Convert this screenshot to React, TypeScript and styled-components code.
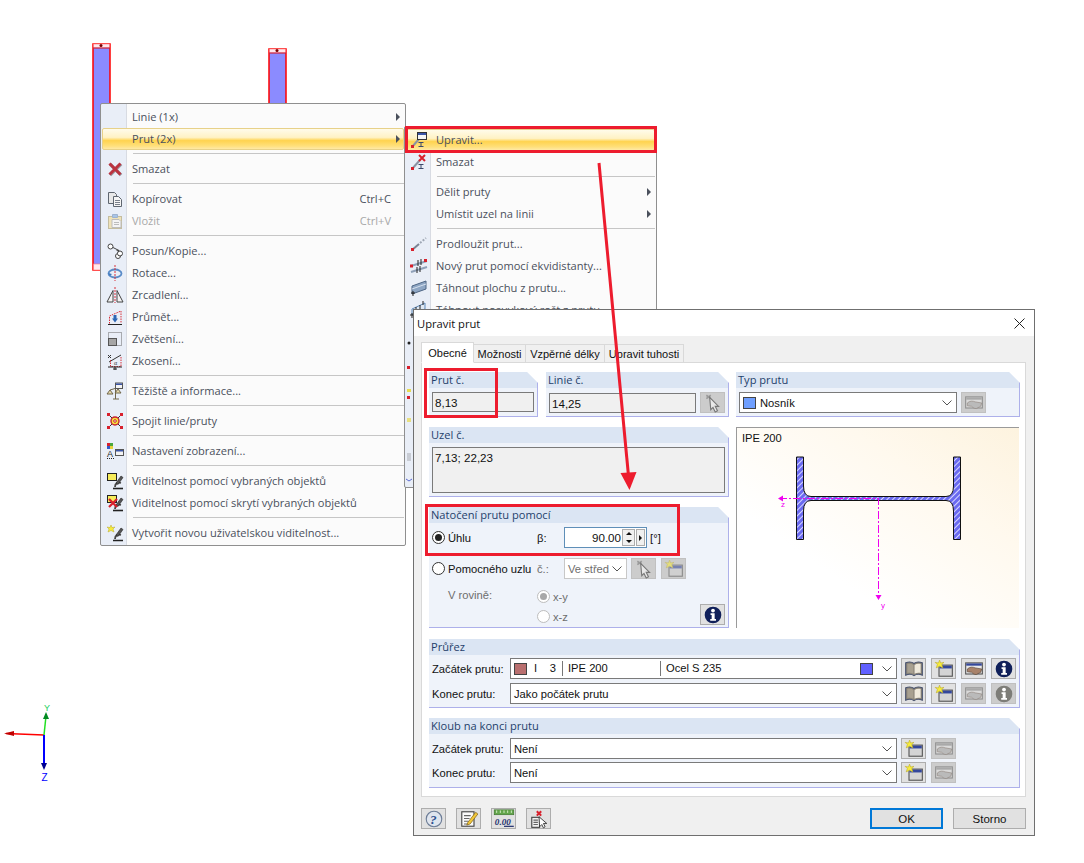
import React from 'react';
import styled, { createGlobalStyle } from 'styled-components';

const GlobalStyle = createGlobalStyle`
  html, body { margin: 0; padding: 0; background: #fff; }
  body { font-family: 'Open Sans', 'Liberation Sans', sans-serif; }
  * { box-sizing: border-box; }
`;

const Canvas = styled.div`
  position: relative;
  width: 1084px;
  height: 863px;
  background: #fff;
  overflow: hidden;
`;

/* ---------- model behind the windows ---------- */

const Drawing = styled.svg`
  position: absolute;
  left: 0;
  top: 0;
`;

/* ---------- context menus ---------- */

const MenuBox = styled.div<{ $left: number; $top: number; $width: number; $height: number }>`
  position: absolute;
  left: ${({ $left }) => $left}px;
  top: ${({ $top }) => $top}px;
  width: ${({ $width }) => $width}px;
  height: ${({ $height }) => $height}px;
  padding: 2px 1px;
  border: 1px solid #8f8f8f;
  border-radius: 2px;
  overflow: hidden;
  background: linear-gradient(90deg, #e9eef7 25px, #d8dbe2 25px, #d8dbe2 26px, #fbfbfb 26px);
  font-family: 'Open Sans', 'Noto Sans', sans-serif;
  font-size: 11.1px;
  color: #4a505c;
`;

const MenuRow = styled.div<{ $active?: boolean; $disabled?: boolean }>`
  display: flex;
  align-items: center;
  height: 22px;
  padding-right: 3px;
  border: 1px solid transparent;
  border-radius: 2px;
  white-space: nowrap;
  color: ${({ $disabled }) => ($disabled ? '#a8a8a8' : 'inherit')};
  ${({ $active }) =>
    $active &&
    `
    border-color: #e7d189;
    background: linear-gradient(#fffbea 0%, #fff2c4 42%, #ffd34f 58%, #ffe07c 85%, #ffe9a6 100%);
  `}
`;

const MenuIcon = styled.span`
  display: flex;
  align-items: center;
  justify-content: center;
  flex: none;
  width: 23px;
  margin-right: 6px;
`;

const MenuLabel = styled.span`
  flex: 1;
  padding-bottom: 2px;
`;

const Shortcut = styled.span`
  margin-right: 9px;
  padding-bottom: 2px;
`;

const SubArrow = styled.span`
  width: 0;
  height: 0;
  margin-left: auto;
  border-left: 4px solid #4a505c;
  border-top: 4px solid transparent;
  border-bottom: 4px solid transparent;
`;

const MenuSeparator = styled.div`
  height: 8px;
  margin-left: 31px;
  padding-top: 3px;
  &::after {
    content: '';
    display: block;
    height: 1px;
    background: #c6c6c6;
  }
`;

const PeekIcons = styled.svg`
  position: absolute;
  left: 1px;
  top: 200px;
`;

/* ---------- dialog ---------- */

const Dialog = styled.div`
  position: absolute;
  left: 413px;
  top: 309px;
  width: 622px;
  height: 527px;
  display: flex;
  flex-direction: column;
  border: 1px solid #6f6f6f;
  background: #f0f0f0;
  font-family: 'Liberation Sans', Arial, sans-serif;
  font-size: 11.2px;
  color: #111;
`;

const TitleBar = styled.div`
  display: flex;
  align-items: center;
  justify-content: space-between;
  height: 26px;
  padding: 0 9px 0 3px;
  background: #fff;
  font-family: 'Open Sans', sans-serif;
  font-size: 11.2px;
  color: #111;
`;

const DialogBody = styled.div`
  display: flex;
  flex-direction: column;
  flex: 1;
  padding: 6px 8px 6px 7px;
`;

const TabStrip = styled.div`
  display: flex;
  align-items: flex-end;
  height: 21px;
  margin-bottom: -1px;
`;

const Tab = styled.div<{ $active?: boolean; $width: number }>`
  position: relative;
  z-index: ${({ $active }) => ($active ? 1 : 0)};
  display: flex;
  align-items: center;
  justify-content: center;
  width: ${({ $width }) => $width}px;
  height: ${({ $active }) => ($active ? 21 : 19)}px;
  border: 1px solid #d9d9d9;
  border-left-width: ${({ $active }) => ($active ? 1 : 0)}px;
  border-bottom-color: ${({ $active }) => ($active ? '#fff' : '#d9d9d9')};
  background: ${({ $active }) => ($active ? '#fff' : '#f0f0f0')};
  font-size: 11px;
`;

const TabPage = styled.div`
  height: 435px;
  padding: 9px 5px 0 7px;
  border: 1px solid #d9d9d9;
  background: #fff;
`;

const UpperGrid = styled.div`
  display: grid;
  grid-template-columns: 300px 284px;
  column-gap: 7px;
  height: 256px;
`;

const Column = styled.div`
  display: flex;
  flex-direction: column;
  gap: 10px;
`;

const SectionRow = styled.div`
  display: grid;
  grid-template-columns: 109px 183px;
  column-gap: 8px;
`;

const Section = styled.section<{ $height: number; $gapTop?: number }>`
  height: ${({ $height }) => $height}px;
  margin-top: ${({ $gapTop }) => $gapTop || 0}px;
  border-right: 1px solid #adb0ea;
  border-bottom: 1px solid #adb0ea;
  background: #eff3fa;
  clip-path: polygon(0 0, calc(100% - 11px) 0, 100% 11px, 100% 100%, 0 100%);
`;

const SectionTitle = styled.div`
  height: 16px;
  padding-left: 2px;
  background: #dbe5f3;
  font-family: 'Open Sans', sans-serif;
  font-size: 11.1px;
  line-height: 15px;
  color: #1f3f6b;
`;

const SectionBody = styled.div<{ $top?: number; $gap?: number }>`
  display: flex;
  flex-direction: column;
  gap: ${({ $gap }) => $gap || 0}px;
  padding: ${({ $top }) => $top ?? 4}px 3px 0;
`;

const FieldRow = styled.div<{ $gap?: number; $top?: number; $left?: number }>`
  display: flex;
  align-items: center;
  gap: ${({ $gap }) => $gap ?? 4}px;
  margin-top: ${({ $top }) => $top || 0}px;
  margin-left: ${({ $left }) => $left || 0}px;
`;

const ReadOnlyField = styled.div<{ $width?: number; $height?: number }>`
  flex: none;
  width: ${({ $width }) => ($width ? `${$width}px` : '100%')};
  height: ${({ $height }) => $height || 20}px;
  padding: 2px 2px;
  border: 1px solid #7a7a7a;
  background: #f0f0f0;
  font-size: 11.6px;
  line-height: 15px;
`;

const Select = styled.div<{ $width: number; $disabled?: boolean }>`
  position: relative;
  display: flex;
  align-items: center;
  flex: none;
  width: ${({ $width }) => $width}px;
  height: 21px;
  padding-left: 3px;
  border: 1px solid ${({ $disabled }) => ($disabled ? '#c8c8c8' : '#7a7a7a')};
  background: #fff;
  color: ${({ $disabled }) => ($disabled ? '#6d6d6d' : '#111')};
`;

const Chevron = styled.svg`
  position: absolute;
  right: 3px;
  top: 6px;
`;

const Swatch = styled.span<{ $color: string }>`
  flex: none;
  width: 13px;
  height: 12px;
  margin-right: 4px;
  border: 1px solid #444;
  background: ${({ $color }) => $color};
`;

const Cell = styled.span<{ $width: number; $divider?: boolean }>`
  flex: none;
  width: ${({ $width }) => $width}px;
  height: 15px;
  line-height: 15px;
  padding-left: ${({ $divider }) => ($divider ? 5 : 0)}px;
  border-left: ${({ $divider }) => ($divider ? '1px solid #777' : '0')};
`;

const IconButton = styled.button<{ $disabled?: boolean }>`
  display: flex;
  align-items: center;
  justify-content: center;
  flex: none;
  width: 25px;
  height: 21px;
  padding: 0;
  border: 1px solid ${({ $disabled }) => ($disabled ? '#c0c0c0' : '#adadad')};
  background: ${({ $disabled }) => ($disabled ? '#cccccc' : '#e1e1e1')};
`;

const Preview = styled.div`
  height: 201px;
  margin-right: 1px;
  padding: 3px 0 0 0;
  border-top: 1px solid #9a9a9a;
  border-left: 1px solid #9a9a9a;
  background: linear-gradient(35deg, #ffffff 30%, #fff9ee 70%, #fdf3df 100%);
`;

const PreviewLabel = styled.div`
  height: 14px;
  padding-left: 5px;
  line-height: 14px;
`;

const PreviewDrawing = styled.svg`
  display: block;
`;

const RadioLabel = styled.label<{ $width: number; $disabled?: boolean }>`
  display: flex;
  align-items: center;
  flex: none;
  gap: 3px;
  width: ${({ $width }) => $width}px;
  white-space: nowrap;
  color: ${({ $disabled }) => ($disabled ? '#6d6d6d' : '#111')};
`;

const Radio = styled.span<{ $checked?: boolean; $disabled?: boolean }>`
  position: relative;
  flex: none;
  width: 13px;
  height: 13px;
  border: 1px solid ${({ $disabled }) => ($disabled ? '#bdbdbd' : '#333')};
  border-radius: 50%;
  background: #fff;
  &::after {
    content: '';
    display: ${({ $checked }) => ($checked ? 'block' : 'none')};
    position: absolute;
    left: 2px;
    top: 2px;
    width: 7px;
    height: 7px;
    border-radius: 50%;
    background: ${({ $disabled }) => ($disabled ? '#a8a8a8' : '#222')};
  }
`;

const SmallLabel = styled.span<{ $width: number; $disabled?: boolean }>`
  flex: none;
  width: ${({ $width }) => $width}px;
  white-space: nowrap;
  color: ${({ $disabled }) => ($disabled ? '#6d6d6d' : '#111')};
`;

const SpinField = styled.div`
  display: flex;
  align-items: center;
  flex: none;
  width: 83px;
  height: 21px;
  padding-right: 1px;
  border: 1px solid #5f8fb8;
  background: #fff;
  font-size: 11.6px;
`;

const SpinValue = styled.span`
  flex: 1;
  text-align: right;
  padding-right: 1px;
`;

const SpinButtons = styled.span`
  display: flex;
  flex-direction: column;
  flex: none;
  width: 13px;
  height: 17px;
  border: 1px solid #adadad;
  background: #f0f0f0;
  font-size: 0;
`;

const SpinPart = styled.span<{ $down?: boolean }>`
  flex: 1;
  display: flex;
  align-items: center;
  justify-content: center;
  &::after {
    content: '';
    border-left: 3px solid transparent;
    border-right: 3px solid transparent;
    ${({ $down }) => ($down ? 'border-top: 3px solid #111;' : 'border-bottom: 3px solid #111;')}
  }
`;

const SpinNext = styled.span`
  display: flex;
  align-items: center;
  justify-content: center;
  flex: none;
  width: 9px;
  height: 17px;
  margin-left: 1px;
  border: 1px solid #adadad;
  background: #f0f0f0;
  &::after {
    content: '';
    border-top: 3px solid transparent;
    border-bottom: 3px solid transparent;
    border-left: 3px solid #111;
  }
`;

const PlaneBlock = styled.div`
  display: flex;
  margin-top: 10px;
  padding-left: 16px;
`;

const PlaneOptions = styled.div`
  display: flex;
  flex-direction: column;
  gap: 7px;
  margin-top: 1px;
`;

const InfoSlot = styled.div`
  margin-left: auto;
  margin-top: 15px;
`;

const Footer = styled.div`
  display: flex;
  align-items: center;
  gap: 10px;
  margin-top: 11px;
`;

const FooterSpacer = styled.div`
  flex: 1;
`;

const DialogButton = styled.button<{ $primary?: boolean }>`
  width: 73px;
  height: 21px;
  padding: 0;
  border: ${({ $primary }) => ($primary ? '2px solid #0078d7' : '1px solid #adadad')};
  background: #e1e1e1;
  font-family: 'Liberation Sans', Arial, sans-serif;
  font-size: 11.5px;
  color: #111;
`;

/* ---------- annotations ---------- */

const RedBox = styled.div<{ $left: number; $top: number; $width: number; $height: number }>`
  position: absolute;
  left: ${({ $left }) => $left}px;
  top: ${({ $top }) => $top}px;
  width: ${({ $width }) => $width}px;
  height: ${({ $height }) => $height}px;
  border: 3px solid #ed1c2e;
  pointer-events: none;
`;

const ArrowOverlay = styled.svg`
  position: absolute;
  left: 0;
  top: 0;
  pointer-events: none;
`;

/* ---------- icons ---------- */

const Ico: React.FC<{ size?: number; children: React.ReactNode }> = ({ size = 18, children }) => (
  <svg width={size} height={size} viewBox="0 0 18 18" fill="none">
    {children}
  </svg>
);

const Beam = () => (
  <g stroke="#3d4a6b" strokeWidth="1">
    <path d="M8.5 15.5h5M8.5 11.5h5M11 11.5v4" />
  </g>
);

const IconDelete = () => (
  <Ico>
    <path d="M3.5 3.5l11 11M14.5 3.5l-11 11" stroke="#9aa0a8" strokeWidth="3.4" transform="translate(.6 .6)" />
    <path d="M3.5 3.5l11 11M14.5 3.5l-11 11" stroke="#bb3340" strokeWidth="3" />
  </Ico>
);
const IconCopy = () => (
  <Ico>
    <path d="M2.5 2.5h6l2 2v9h-8z" fill="#e8e8e8" stroke="#5f6670" />
    <path d="M7.5 6.5h5l3 3v7h-8z" fill="#f5f5f5" stroke="#5f6670" />
    <path d="M9 10.5h5M9 12.5h5M9 14.5h5" stroke="#7a808a" />
  </Ico>
);
const IconPaste = () => (
  <Ico>
    <rect x="2.5" y="4.5" width="13" height="12" fill="#efe2b8" stroke="#c4bd9f" />
    <path d="M6.5 2.5h5v3h-5z" fill="#a8c4e6" stroke="#9eb2cf" />
    <path d="M6 7.5h7l2 2v6h-9z" fill="#f4f4f4" stroke="#bdbdbd" />
    <path d="M8 10.5h5M8 12.5h5" stroke="#bcbcbc" />
  </Ico>
);
const IconMove = () => (
  <Ico>
    <circle cx="4.5" cy="4.5" r="2.5" stroke="#444" fill="#fff" />
    <circle cx="12" cy="14" r="2.5" stroke="#444" fill="#fff" />
    <circle cx="14" cy="11.5" r="2.5" stroke="#444" fill="#fff" />
    <path d="M7 5.5l6 3M13 8.5l-2.5-.2M13 8.5l-1.4 1.9" stroke="#444" />
  </Ico>
);
const IconRotate = () => (
  <Ico>
    <ellipse cx="9" cy="9.5" rx="6.5" ry="4" stroke="#5a8cc8" strokeWidth="1.8" />
    <path d="M2 9l2 3 2-2" fill="#3f78bd" />
    <path d="M9 1v16" stroke="#d9303a" strokeDasharray="2 1" />
  </Ico>
);
const IconMirror = () => (
  <Ico>
    <path d="M7 4.5v11.5h-6zM11 4.5v11.5h6z" stroke="#444" fill="#f4f4f4" />
    <path d="M9 1v16" stroke="#d9303a" strokeDasharray="2 1" />
  </Ico>
);
const IconProject = () => (
  <Ico>
    <path d="M2 16.5h14" stroke="#222" />
    <path d="M3.5 15.5V8L15 3v12.5" stroke="#d9303a" strokeDasharray="1.5 1" />
    <path d="M9 7v4" stroke="#2d67b5" strokeWidth="3" />
    <path d="M6 10.5h6l-3 4z" fill="#2d67b5" />
  </Ico>
);
const IconScale = () => (
  <Ico>
    <rect x="2.5" y="2.5" width="13" height="13" stroke="#666" strokeDasharray="1 1" />
    <rect x="2.5" y="8.5" width="8" height="7" fill="#a5a5a5" stroke="#555" />
  </Ico>
);
const IconSkew = () => (
  <Ico>
    <path d="M2 3l3 3M5 3L2 6M3 10l12-7" stroke="#333" />
    <path d="M4.5 8v6.5H15V4" stroke="#d9303a" strokeDasharray="1.5 1" />
    <path d="M2 15h14M9 15v3M7 17h4" stroke="#222" />
    <text x="8" y="13" fontSize="6" fill="#333" fontFamily="Liberation Serif, serif">α</text>
  </Ico>
);
const IconBalance = () => (
  <Ico>
    <path d="M7 17h6M9.5 17V6M4 8l10-3" stroke="#71664a" />
    <path d="M1 12h6l-3-4zM9 11h6l-3-4z" fill="#e8dcae" stroke="#71664a" />
    <rect x="9.5" y="1" width="7" height="5.5" fill="#f3f3f3" stroke="#555" />
    <rect x="10" y="1.5" width="6" height="1.5" fill="#3a55a8" />
  </Ico>
);
const IconJoin = () => (
  <Ico>
    <path d="M3 3l12 12M15 3L3 15" stroke="#333" />
    <circle cx="9" cy="9" r="4" fill="#f5e23c" stroke="#c8202f" strokeWidth="1.4" />
    <circle cx="9" cy="9" r="1.3" fill="#fff" stroke="#c8202f" />
    <path d="M1 1h3v3H1zM14 1h3v3h-3zM1 14h3v3H1zM14 14h3v3h-3z" fill="#d8202c" />
  </Ico>
);
const IconDisplay = () => (
  <Ico>
    <path d="M1 1h3v3H1z" fill="#d8202c" />
    <path d="M4 1h3v3H4z" fill="#4aa63c" />
    <path d="M1 4h3v3H1z" fill="#3458c8" />
    <path d="M4 4h3v3H4z" fill="#e8d23c" />
    <text x="1" y="15" fontSize="9" fill="#222" fontFamily="Liberation Sans, sans-serif">A</text>
    <path d="M1 16.5h7" stroke="#222" strokeDasharray="1 1" />
    <rect x="9.5" y="7.5" width="8" height="6" fill="#f3f3f3" stroke="#555" />
    <rect x="10" y="8" width="7" height="1.5" fill="#3a55a8" />
  </Ico>
);
const Scope = () => (
  <g>
    <path d="M7 16.5h10" stroke="#222" strokeWidth="1.6" />
    <path d="M9 15c0-4 3-5 6-4" stroke="#444" strokeWidth="1.8" />
    <path d="M10 11l5-7 2 1.500-5 7z" fill="#555" stroke="#222" strokeWidth=".6" />
  </g>
);
const IconVisible = () => (
  <Ico>
    <rect x="1.500" y="1.500" width="9" height="7" fill="#f7ec5a" stroke="#222" />
    <Scope />
  </Ico>
);
const IconHide = () => (
  <Ico>
    <rect x="1.500" y="1.500" width="9" height="7" fill="#f7ec5a" stroke="#222" />
    <Scope />
    <path d="M3 5l8 8M11 5l-8 8" stroke="#d8202c" strokeWidth="2.2" />
  </Ico>
);
const Star = ({ x = 0, y = 0 }: { x?: number; y?: number }) => (
  <path
    transform={`translate(${x} ${y})`}
    d="M4 0l1 2.600L8 2 6 4l1 3-3-1.500L1 7l1-3-2-2 3 .6z"
    fill="#f7ec3c"
    stroke="#b9a92a"
    strokeWidth=".5"
  />
);
const IconNewVisible = () => (
  <Ico>
    <Scope />
    <Star x={1} y={1} />
  </Ico>
);
const IconEdit = () => (
  <Ico>
    <path d="M2 16L9 8" stroke="#8a93a3" strokeWidth="2" />
    <rect x="1" y="14" width="3" height="3" fill="#d8202c" />
    <rect x="7.500" y="1.500" width="9" height="7" fill="#f5f5f5" stroke="#333" />
    <rect x="8" y="2" width="8" height="2" fill="#3a55a8" />
    <Beam />
  </Ico>
);
const IconBeamDelete = () => (
  <Ico>
    <path d="M2 16L10 7" stroke="#8a93a3" strokeWidth="2" />
    <rect x="1" y="14" width="3" height="3" fill="#d8202c" />
    <path d="M9 2l6 6M15 2L9 8" stroke="#d8202c" strokeWidth="2" />
    <Beam />
  </Ico>
);
const IconExtend = () => (
  <Ico>
    <path d="M2 15l7-6" stroke="#7a8494" strokeWidth="2" />
    <path d="M10 8l6-5" stroke="#a0a8b5" strokeWidth="2" strokeDasharray="2 1.500" />
    <rect x="1" y="13" width="3" height="3" fill="#d8202c" />
  </Ico>
);
const IconOffset = () => (
  <Ico>
    <path d="M1 9L17 4M1 15L17 10" stroke="#8fa0b8" strokeWidth="2" />
    <path d="M8 3v6M11 2v6M7 10v6M10 9v6" stroke="#222" />
    <rect x="0" y="7.500" width="3" height="3" fill="#d8202c" />
    <rect x="14" y="2" width="3" height="3" fill="#d8202c" />
  </Ico>
);
const IconExtrude = () => (
  <Ico>
    <path d="M2 7L16 2v8L2 15z" fill="#8ea6c4" stroke="#4f6685" />
    <path d="M2 10L16 5" stroke="#d5e0ee" />
    <path d="M1 14h4M3 12v5" stroke="#222" />
  </Ico>
);
const IconGrid = () => (
  <Ico>
    <path d="M2 8L15 2v6L2 14z" fill="#dfe8f3" stroke="#5f89b8" />
    <path d="M6 6v7M10 4v7M0 14h4M2 12v5M13 0v4" stroke="#222" />
  </Ico>
);

const IconBook: React.FC = () => (
  <Ico size={20}>
    <path d="M9 4C7 2.500 4 2.500 1.500 3.500v11C4 13.500 7 13.500 9 15c2-1.500 5-1.500 7.500-.5v-11C14 2.500 11 2.500 9 4z" fill="#8a8478" stroke="#4a5470" />
    <path d="M3 4.500c2-.5 4-.3 5.500.8v8c-1.500-.9-3.500-1-5.500-.7z" fill="#a8a090" />
    <path d="M15 4.500c-2-.5-4-.3-5.500.8v8c1.500-.9 3.500-1 5.500-.7z" fill="#efe9db" />
  </Ico>
);
const IconNew: React.FC<{ faded?: boolean }> = ({ faded }) => (
  <Ico size={20}>
    <g opacity={faded ? 0.55 : 1}>
      <rect x="4.500" y="5.500" width="12" height="10" fill="#d4d4d4" stroke="#555" />
      <rect x="5" y="6" width="11" height="2.500" fill="#33479c" />
      <Star x={1} y={1} />
    </g>
  </Ico>
);
const IconHands: React.FC<{ faded?: boolean }> = ({ faded }) => (
  <Ico size={20}>
    <g opacity={faded ? 0.5 : 1}>
      <rect x="1.500" y="3.500" width="15" height="10" fill="#e8e8e8" stroke="#555" />
      <rect x="2" y="4" width="14" height="2" fill={faded ? '#888' : '#33479c'} />
      <path d="M3 9c2-2 5-2 7-1l6 1-1 3-4 2c-2 0-3-1-4-2l-4-.5z" fill={faded ? '#aaa' : '#a8826a'} stroke="#5a4638" strokeWidth=".6" />
    </g>
  </Ico>
);
const IconInfo: React.FC<{ faded?: boolean }> = ({ faded }) => (
  <Ico size={20}>
    <circle cx="9" cy="9" r="7.500" fill={faded ? '#7d7d78' : '#10205a'} />
    <circle cx="9" cy="5" r="1.700" fill="#fff" />
    <path d="M6.800 7.500H10.500v5.200h1.200v1.500H6.500v-1.500h1.300V9H6.800z" fill="#fff" />
  </Ico>
);
const IconPick: React.FC = () => (
  <Ico size={20}>
    <path d="M3 2l4 3M7 2L3 5" stroke="#9a9a9a" strokeWidth="1.500" />
    <path d="M6 4l8 8h-3l2 4-2 1-2-4-2 2z" fill="#e8e8e8" stroke="#777" />
  </Ico>
);
const IconHelp: React.FC = () => (
  <Ico size={20}>
    <circle cx="9" cy="9" r="7" fill="#dfe5ee" stroke="#6c7c96" />
    <text x="5.500" y="13.500" fontSize="12" fontWeight="700" fontStyle="italic" fill="#2c4f8e" fontFamily="Liberation Serif, serif">?</text>
  </Ico>
);
const IconNotes: React.FC = () => (
  <Ico size={20}>
    <rect x="2.500" y="2.500" width="11" height="13" fill="#fafafa" stroke="#444" />
    <path d="M4.500 6h6M4.500 8.500h5M4.500 11h4M4.500 13.500h4" stroke="#666" />
    <path d="M8 12L15 3l2 1.500-7 9-3 1z" fill="#f2c83a" stroke="#7a5a10" strokeWidth=".6" />
  </Ico>
);
const IconDecimals: React.FC = () => (
  <Ico size={22}>
    <rect x="1" y="1.500" width="16" height="4" fill="#63a64c" stroke="#3a6e2a" strokeWidth=".5" />
    <path d="M3 2v2M6 2v2M9 2v2M12 2v2M15 2v2" stroke="#d6ecc8" strokeWidth=".8" />
    <text x="1.500" y="13.500" fontSize="7.500" fontWeight="700" fontStyle="italic" fill="#24306e" fontFamily="Liberation Serif, serif">0.00</text>
    <path d="M9 15h8" stroke="#24306e" />
  </Ico>
);
const IconSelectObj: React.FC = () => (
  <Ico size={20}>
    <rect x="2.500" y="7.500" width="7" height="9" fill="#f3f3f3" stroke="#444" />
    <path d="M4 10h4M4 12h4M4 14h4" stroke="#666" />
    <path d="M7 2l4 4M11 2L7 6" stroke="#d8202c" strokeWidth="1.800" />
    <path d="M9 7l7 6h-3l1.500 3-1.500 1-1.500-3-2 2z" fill="#fff" stroke="#333" strokeWidth=".8" />
  </Ico>
);

/* ---------- data ---------- */

type MenuEntry =
  | 'sep'
  | { label: string; icon?: React.ReactNode; shortcut?: string; arrow?: boolean; active?: boolean; disabled?: boolean };

const mainMenu: MenuEntry[] = [
  { label: 'Linie (1x)', arrow: true },
  { label: 'Prut (2x)', arrow: true, active: true },
  'sep',
  { label: 'Smazat', icon: <IconDelete /> },
  'sep',
  { label: 'Kopírovat', icon: <IconCopy />, shortcut: 'Ctrl+C' },
  { label: 'Vložit', icon: <IconPaste />, shortcut: 'Ctrl+V', disabled: true },
  'sep',
  { label: 'Posun/Kopie...', icon: <IconMove /> },
  { label: 'Rotace...', icon: <IconRotate /> },
  { label: 'Zrcadlení...', icon: <IconMirror /> },
  { label: 'Průmět...', icon: <IconProject /> },
  { label: 'Zvětšení...', icon: <IconScale /> },
  { label: 'Zkosení...', icon: <IconSkew /> },
  'sep',
  { label: 'Těžiště a informace...', icon: <IconBalance /> },
  'sep',
  { label: 'Spojit linie/pruty', icon: <IconJoin /> },
  'sep',
  { label: 'Nastavení zobrazení...', icon: <IconDisplay /> },
  'sep',
  { label: 'Viditelnost pomocí vybraných objektů', icon: <IconVisible /> },
  { label: 'Viditelnost pomocí skrytí vybraných objektů', icon: <IconHide /> },
  'sep',
  { label: 'Vytvořit novou uživatelskou viditelnost...', icon: <IconNewVisible /> },
];

const subMenu: MenuEntry[] = [
  { label: 'Upravit...', icon: <IconEdit />, active: true },
  { label: 'Smazat', icon: <IconBeamDelete /> },
  'sep',
  { label: 'Dělit pruty', arrow: true },
  { label: 'Umístit uzel na linii', arrow: true },
  'sep',
  { label: 'Prodloužit prut...', icon: <IconExtend /> },
  { label: 'Nový prut pomocí ekvidistanty...', icon: <IconOffset /> },
  { label: 'Táhnout plochu z prutu...', icon: <IconExtrude /> },
  { label: 'Táhnout posuvkový rošt z prutu...', icon: <IconGrid /> },
];

const tabs = [
  { label: 'Obecné', width: 53, active: true },
  { label: 'Možnosti', width: 52 },
  { label: 'Vzpěrné délky', width: 79 },
  { label: 'Upravit tuhosti', width: 79 },
];

const MenuItems: React.FC<{ items: MenuEntry[] }> = ({ items }) => (
  <>
    {items.map((item, index) =>
      item === 'sep' ? (
        <MenuSeparator key={index} />
      ) : (
        <MenuRow key={index} $active={item.active} $disabled={item.disabled}>
          <MenuIcon>{item.icon}</MenuIcon>
          <MenuLabel>{item.label}</MenuLabel>
          {item.shortcut && <Shortcut>{item.shortcut}</Shortcut>}
          {item.arrow && <SubArrow />}
        </MenuRow>
      ),
    )}
  </>
);

const SelectChevron = () => (
  <Chevron width="12" height="8" viewBox="0 0 12 8" fill="none">
    <path d="M1.500 1.500L6 6l4.500-4.500" stroke="#555" />
  </Chevron>
);

const ModelDrawing = () => (
  <Drawing width="1084" height="863">
    <rect x="93" y="44" width="17" height="226" fill="#8b8bff" stroke="#f00" strokeWidth="1.500" />
    <rect x="93.500" y="44" width="16" height="4" fill="#ffe8ee" stroke="#f77" strokeWidth=".6" />
    <path d="M93 48h17" stroke="#c01030" />
    <circle cx="101" cy="45.500" r="1.500" fill="#700" />
    <rect x="93.500" y="264" width="16" height="6" fill="#ffe8ee" stroke="#f77" strokeWidth=".6" />
    <rect x="269" y="49" width="17" height="230" fill="#8b8bff" stroke="#f00" strokeWidth="1.500" />
    <rect x="269.500" y="49" width="16" height="4" fill="#ffe8ee" stroke="#f77" strokeWidth=".6" />
    <path d="M269 53h17" stroke="#c01030" />
    <circle cx="277" cy="50.500" r="1.500" fill="#700" />
    <path d="M44 735L6 733.500" stroke="#f00" strokeWidth="1.500" />
    <path d="M4 733.500L14 731v5z" fill="#c00000" />
    <path d="M44 735L46 716" stroke="#20e020" strokeWidth="1.500" />
    <path d="M46 712l3 7h-6z" fill="#008a20" />
    <path d="M44 735v31" stroke="#0000ff" strokeWidth="2" />
    <path d="M44 770l-3-7h6z" fill="#000090" />
    <text x="47" y="711" fontSize="9" fill="#20d060" textAnchor="middle" fontFamily="Liberation Sans, sans-serif">Y</text>
    <text x="44.500" y="781" fontSize="10" fill="#0000ff" textAnchor="middle" fontFamily="Liberation Sans, sans-serif">Z</text>
  </Drawing>
);

const App: React.FC = () => (
  <Canvas>
    <GlobalStyle />
    <ModelDrawing />

    <MenuBox $left={100} $top={103} $width={306} $height={443}>
      <MenuItems items={mainMenu} />
    </MenuBox>

    <MenuBox $left={404} $top={126} $width={253} $height={362}>
      <MenuItems items={subMenu} />
      <PeekIcons width="10" height="160" viewBox="0 0 10 160">
        <circle cx="3" cy="16" r="1.500" fill="#222" />
        <rect x="1" y="39" width="3" height="3" fill="#d8202c" />
        <rect x="1" y="62" width="4" height="3" fill="#e8dc50" />
        <rect x="1" y="69" width="3" height="3" fill="#d8202c" />
        <rect x="1" y="91" width="4" height="4" fill="#e8e080" />
        <rect x="1" y="126" width="4" height="8" fill="#c8ccd4" />
        <path d="M0 152l3 2 3-2" stroke="#5a6ad0" fill="none" />
      </PeekIcons>
    </MenuBox>

    <Dialog>
      <TitleBar>
        Upravit prut
        <svg width="11" height="11" viewBox="0 0 11 11" fill="none">
          <path d="M.5.5l10 10M10.500.5l-10 10" stroke="#222" />
        </svg>
      </TitleBar>
      <DialogBody>
        <TabStrip>
          {tabs.map((tab) => (
            <Tab key={tab.label} $active={tab.active} $width={tab.width}>
              {tab.label}
            </Tab>
          ))}
        </TabStrip>
        <TabPage>
          <UpperGrid>
            <Column>
              <SectionRow>
                <Section $height={45}>
                  <SectionTitle>Prut č.</SectionTitle>
                  <SectionBody>
                    <ReadOnlyField $width={102}>8,13</ReadOnlyField>
                  </SectionBody>
                </Section>
                <Section $height={45}>
                  <SectionTitle>Linie č.</SectionTitle>
                  <SectionBody>
                    <FieldRow>
                      <ReadOnlyField $width={147}>14,25</ReadOnlyField>
                      <IconButton $disabled>
                        <IconPick />
                      </IconButton>
                    </FieldRow>
                  </SectionBody>
                </Section>
              </SectionRow>
              <Section $height={70}>
                <SectionTitle>Uzel č.</SectionTitle>
                <SectionBody>
                  <ReadOnlyField $width={293} $height={46}>
                    7,13; 22,23
                  </ReadOnlyField>
                </SectionBody>
              </Section>
              <Section $height={121}>
                <SectionTitle>Natočení prutu pomocí</SectionTitle>
                <SectionBody>
                  <FieldRow $gap={0}>
                    <RadioLabel $width={105}>
                      <Radio $checked />
                      Úhlu
                    </RadioLabel>
                    <SmallLabel $width={27}>β:</SmallLabel>
                    <SpinField>
                      <SpinValue>90.00</SpinValue>
                      <SpinButtons>
                        <SpinPart />
                        <SpinPart $down />
                      </SpinButtons>
                      <SpinNext />
                    </SpinField>
                    <SmallLabel $width={20}>&nbsp;[°]</SmallLabel>
                  </FieldRow>
                  <FieldRow $gap={0} $top={10}>
                    <RadioLabel $width={105}>
                      <Radio />
                      Pomocného uzlu
                    </RadioLabel>
                    <SmallLabel $width={27} $disabled>
                      č.:
                    </SmallLabel>
                    <Select $width={63} $disabled>
                      Ve střed
                      <SelectChevron />
                    </Select>
                    <FieldRow $gap={5} $left={4}>
                      <IconButton $disabled>
                        <IconPick />
                      </IconButton>
                      <IconButton $disabled>
                        <IconNew faded />
                      </IconButton>
                    </FieldRow>
                  </FieldRow>
                  <PlaneBlock>
                    <SmallLabel $width={89} $disabled>
                      V rovině:
                    </SmallLabel>
                    <PlaneOptions>
                      <RadioLabel $width={50} $disabled>
                        <Radio $checked $disabled />
                        x-y
                      </RadioLabel>
                      <RadioLabel $width={50} $disabled>
                        <Radio $disabled />
                        x-z
                      </RadioLabel>
                    </PlaneOptions>
                    <InfoSlot>
                      <IconButton>
                        <IconInfo />
                      </IconButton>
                    </InfoSlot>
                  </PlaneBlock>
                </SectionBody>
              </Section>
            </Column>
            <Column>
              <Section $height={45}>
                <SectionTitle>Typ prutu</SectionTitle>
                <SectionBody>
                  <FieldRow>
                    <Select $width={218}>
                      <Swatch $color="#6f9fff" />
                      Nosník
                      <SelectChevron />
                    </Select>
                    <IconButton $disabled>
                      <IconHands faded />
                    </IconButton>
                  </FieldRow>
                </SectionBody>
              </Section>
              <Preview>
                <PreviewLabel>IPE 200</PreviewLabel>
                <PreviewDrawing width="282" height="183" viewBox="737 445 282 183">
                  <defs>
                    <pattern id="hatch" width="4" height="4" patternUnits="userSpaceOnUse" patternTransform="rotate(45)">
                      <rect width="4" height="4" fill="#6a6af0" />
                      <rect width="1" height="4" fill="#d8d8ff" />
                    </pattern>
                  </defs>
                  <path
                    d="M796.500 457H803.500V486Q803.500 496.500 811 496.500H946Q953.500 496.500 953.500 486V457H960.500V539.500H953.500V511Q953.500 500.500 946 500.500H811Q803.500 500.500 803.500 511V539.500H796.500Z"
                    fill="url(#hatch)"
                    stroke="#111"
                  />
                  <path d="M779 498.500H878.500V598" stroke="#f000f0" strokeDasharray="8 2 2 2" fill="none" />
                  <path d="M778 498.500l5-3v6zM878.500 600l-3-5h6z" fill="#f000f0" />
                  <text x="783" y="507" fontSize="8" fill="#f000f0" textAnchor="middle" fontFamily="Liberation Sans, sans-serif">z</text>
                  <text x="883" y="608" fontSize="8" fill="#f000f0" textAnchor="middle" fontFamily="Liberation Sans, sans-serif">y</text>
                </PreviewDrawing>
              </Preview>
            </Column>
          </UpperGrid>
          <Section $height={69} $gapTop={11}>
            <SectionTitle>Průřez</SectionTitle>
            <SectionBody $top={3} $gap={4}>
              <FieldRow $gap={0}>
                <SmallLabel $width={78}>Začátek prutu:</SmallLabel>
                <Select $width={387}>
                  <Swatch $color="#b96f6f" />
                  <Cell $width={31}>&nbsp;I&nbsp;&nbsp;&nbsp;&nbsp;3</Cell>
                  <Cell $width={98} $divider>IPE 200</Cell>
                  <Cell $width={200} $divider>Ocel S 235</Cell>
                  <Swatch $color="#6060ff" />
                  <SelectChevron />
                </Select>
                <FieldRow $gap={5} $left={4}>
                  <IconButton><IconBook /></IconButton>
                  <IconButton><IconNew /></IconButton>
                  <IconButton><IconHands /></IconButton>
                  <IconButton><IconInfo /></IconButton>
                </FieldRow>
              </FieldRow>
              <FieldRow $gap={0}>
                <SmallLabel $width={78}>Konec prutu:</SmallLabel>
                <Select $width={387}>
                  Jako počátek prutu
                  <SelectChevron />
                </Select>
                <FieldRow $gap={5} $left={4}>
                  <IconButton><IconBook /></IconButton>
                  <IconButton><IconNew /></IconButton>
                  <IconButton $disabled><IconHands faded /></IconButton>
                  <IconButton $disabled><IconInfo faded /></IconButton>
                </FieldRow>
              </FieldRow>
            </SectionBody>
          </Section>
          <Section $height={70} $gapTop={10}>
            <SectionTitle>Kloub na konci prutu</SectionTitle>
            <SectionBody $top={4} $gap={3}>
              <FieldRow $gap={0}>
                <SmallLabel $width={78}>Začátek prutu:</SmallLabel>
                <Select $width={387}>
                  Není
                  <SelectChevron />
                </Select>
                <FieldRow $gap={5} $left={4}>
                  <IconButton><IconNew /></IconButton>
                  <IconButton $disabled><IconHands faded /></IconButton>
                </FieldRow>
              </FieldRow>
              <FieldRow $gap={0}>
                <SmallLabel $width={78}>Konec prutu:</SmallLabel>
                <Select $width={387}>
                  Není
                  <SelectChevron />
                </Select>
                <FieldRow $gap={5} $left={4}>
                  <IconButton><IconNew /></IconButton>
                  <IconButton $disabled><IconHands faded /></IconButton>
                </FieldRow>
              </FieldRow>
            </SectionBody>
          </Section>
        </TabPage>
        <Footer>
          <IconButton><IconHelp /></IconButton>
          <IconButton><IconNotes /></IconButton>
          <IconButton><IconDecimals /></IconButton>
          <IconButton><IconSelectObj /></IconButton>
          <FooterSpacer />
          <DialogButton $primary>OK</DialogButton>
          <DialogButton>Storno</DialogButton>
        </Footer>
      </DialogBody>
    </Dialog>

    <RedBox $left={405} $top={126} $width={252} $height={27} />
    <RedBox $left={424} $top={368} $width={74} $height={50} />
    <RedBox $left={425} $top={504} $width={255} $height={52} />
    <ArrowOverlay width="1084" height="863">
      <path d="M599 163L628.500 476" stroke="#ed1c2e" strokeWidth="3" />
      <path d="M629.500 490L620.500 473L636.500 472Z" fill="#ed1c2e" />
    </ArrowOverlay>
  </Canvas>
);

export default App;
